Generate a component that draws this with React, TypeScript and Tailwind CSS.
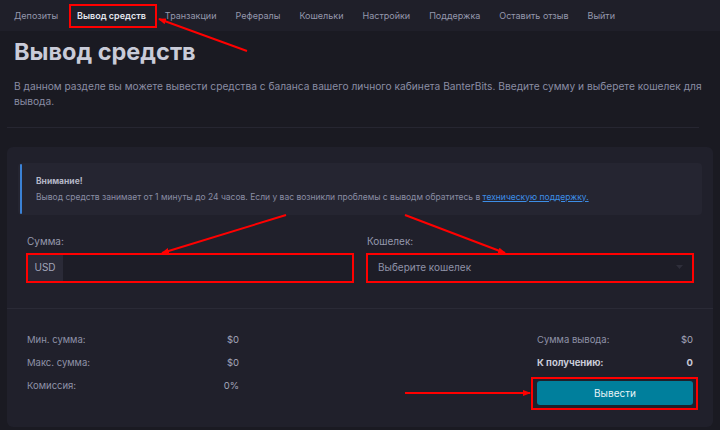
import React from "react";

const navItems = [
  "Депозиты",
  "Вывод средств",
  "Транзакции",
  "Рефералы",
  "Кошельки",
  "Настройки",
  "Поддержка",
  "Оставить отзыв",
  "Выйти",
];

function StatRow({ label, value, bold }: { label: string; value: string; bold?: boolean }) {
  return (
    <div className="flex h-[23px] items-center justify-between">
      <span className={bold ? "font-bold text-[#c9cbd8]" : "text-[#8f92a8]"}>{label}</span>
      <span className={bold ? "font-bold text-[#c9cbd8]" : "text-[#a3a6ba]"}>{value}</span>
    </div>
  );
}

function Annotations() {
  const red = "#ff0000";
  return (
    <svg className="pointer-events-none absolute inset-0" width="720" height="430" viewBox="0 0 720 430">
      <defs>
        <marker id="head" markerWidth="8" markerHeight="6" refX="7" refY="3" orient="auto" markerUnits="userSpaceOnUse">
          <path d="M0 0 L8 3 L0 6 Z" fill={red} />
        </marker>
      </defs>
      <g fill="none" stroke={red} strokeWidth="2">
        <rect x="70" y="5" width="86" height="22" />
        <rect x="27" y="254" width="326" height="28" />
        <rect x="367" y="254" width="326" height="28" />
        <rect x="532" y="378" width="165" height="31" />
        <line x1="247" y1="51" x2="159" y2="19" markerEnd="url(#head)" />
        <line x1="286" y1="215" x2="162" y2="253" markerEnd="url(#head)" />
        <line x1="405" y1="215" x2="505" y2="253" markerEnd="url(#head)" />
        <line x1="405" y1="393" x2="530" y2="393" markerEnd="url(#head)" />
      </g>
    </svg>
  );
}

export default function App() {
  return (
    <div
      className="relative h-[430px] w-[720px] overflow-hidden bg-[#1a1a22] text-[#9da0b5]"
      style={{ fontFamily: "Inter, 'Noto Sans', sans-serif" }}
    >
      {/* top nav */}
      <nav className="flex h-[31px] items-center gap-[19px] bg-[#1f1f29] px-[14px] text-[9px]">
        {navItems.map((item) => (
          <span
            key={item}
            className={item === "Вывод средств" ? "font-semibold text-[#e4e5ee]" : "text-[#9598ad]"}
          >
            {item}
          </span>
        ))}
      </nav>

      <div className="px-[14px]">
        <h1 className="mt-[5px] text-[23.5px] font-bold leading-[32px] text-[#c9cbd8]">Вывод средств</h1>
        <p className="mt-[11px] text-[10.2px] leading-[15px] text-[#8a8da4]">
          В данном разделе вы можете вывести средства с баланса вашего личного кабинета BanterBits. Введите сумму и
          выберете кошелек для вывода.
        </p>
      </div>
      <div className="mx-[7px] mt-[18px] h-px w-[692px] bg-[#262631]" />

      {/* card */}
      <div className="mx-[7px] mt-[19px] rounded-[6px] bg-[#20202b] pb-[22px]">
        <div className="px-[11px] pt-[16px] pb-[27px]">
          <div className="flex h-[52px] rounded-[4px] bg-[#252531]">
            <div className="my-[1px] ml-[2px] w-[2px] rounded bg-[#3b82d6]" />
            <div className="flex flex-col justify-center gap-[5px] px-[14px] text-[8.5px] leading-[11px]">
              <div className="font-bold text-[#b4b6c6]">Внимание!</div>
              <div className="text-[#8a8da4]">
                Вывод средств занимает от 1 минуты до 24 часов. Если у вас возникли проблемы с выводм обратитесь в{" "}
                <span className="text-[#3d8ee6] underline">техническую поддержку.</span>
              </div>
            </div>
          </div>

          <div className="mt-[20px] grid grid-cols-2 gap-[14px] px-[9px] text-[10px]">
            <div>
              <div className="mb-[6px] leading-[13px] text-[#9598ad]">Сумма:</div>
              <div className="flex h-[27px] overflow-hidden rounded-[3px] bg-[#1d1d27]">
                <span className="flex w-[36px] items-center justify-center bg-[#2a2a37] text-[#a3a6ba]">USD</span>
                <span className="flex-1" />
              </div>
            </div>
            <div>
              <div className="mb-[6px] leading-[13px] text-[#9598ad]">Кошелек:</div>
              <div className="flex h-[27px] items-center justify-between rounded-[3px] bg-[#1d1d27] pl-[11px] pr-[10px] text-[#8f92a8]">
                <span>Выберите кошелек</span>
                <svg width="7" height="5" viewBox="0 0 7 5">
                  <path d="M0 0 L7 0 L3.5 4 Z" fill="#2e2e3a" />
                </svg>
              </div>
            </div>
          </div>
        </div>

        <div className="h-px bg-[#2a2a36]" />

        <div className="flex justify-between px-[20px] pt-[20px] text-[9.5px]">
          <div className="w-[212px]">
            <StatRow label="Мин. сумма:" value="$0" />
            <StatRow label="Макс. сумма:" value="$0" />
            <StatRow label="Комиссия:" value="0%" />
          </div>
          <div className="w-[156px]">
            <StatRow label="Сумма вывода:" value="$0" />
            <StatRow label="К получению:" value="0" bold />
            <button className="mt-[6px] h-[24px] w-full rounded-[3px] bg-[#007f9c] text-[10px] text-[#e8f4f7]">
              Вывести
            </button>
          </div>
        </div>
      </div>

      <Annotations />
    </div>
  );
}
